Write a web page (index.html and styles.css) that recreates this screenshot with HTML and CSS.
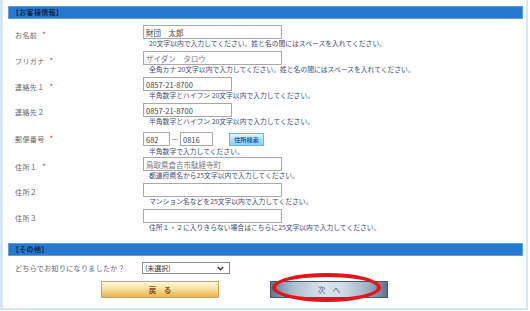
FILE: index.html
```html
<!DOCTYPE html>
<html lang="ja">
<head>
<meta charset="utf-8">
<title>お客様情報</title>
<link rel="stylesheet" href="styles.css">
</head>
<body>
<div class="page">
  <div class="sec-head">【お客様情報】</div>
  <div class="form">
    <div class="row">
      <div class="label">お名前<span class="req">*</span></div>
      <div class="field">
        <div class="inputs"><input class="in wide" type="text" value="財団　太郎"></div>
        <div class="help">20文字以内で入力してください。姓と名の間にはスペースを入れてください。</div>
      </div>
    </div>
    <div class="row">
      <div class="label">フリガナ<span class="req">*</span></div>
      <div class="field">
        <div class="inputs"><input class="in wide muted" type="text" value="ザイダン　タロウ"></div>
        <div class="help">全角カナ 20文字以内で入力してください。姓と名の間にはスペースを入れてください。</div>
      </div>
    </div>
    <div class="row">
      <div class="label">連絡先１<span class="req">*</span></div>
      <div class="field">
        <div class="inputs"><input class="in tel" type="text" value="0857-21-8700"></div>
        <div class="help">半角数字とハイフン 20文字以内で入力してください。</div>
      </div>
    </div>
    <div class="row">
      <div class="label">連絡先２</div>
      <div class="field">
        <div class="inputs"><input class="in tel" type="text" value="0857-21-8700"></div>
        <div class="help">半角数字とハイフン 20文字以内で入力してください。</div>
      </div>
    </div>
    <div class="row zip-row">
      <div class="label">郵便番号<span class="req">*</span></div>
      <div class="field">
        <div class="inputs">
          <input class="in zip1" type="text" value="682">
          <span class="dash">－</span>
          <input class="in zip2" type="text" value="0816">
          <button class="search" type="button">住所検索</button>
        </div>
        <div class="help">半角数字で入力してください。</div>
      </div>
    </div>
    <div class="row">
      <div class="label">住所１<span class="req">*</span></div>
      <div class="field">
        <div class="inputs"><input class="in wide muted" type="text" value="鳥取県倉吉市駄経寺町"></div>
        <div class="help">都道府県名から25文字以内で入力してください。</div>
      </div>
    </div>
    <div class="row">
      <div class="label">住所２</div>
      <div class="field">
        <div class="inputs"><input class="in wide" type="text" value=""></div>
        <div class="help">マンション名などを25文字以内で入力してください。</div>
      </div>
    </div>
    <div class="row">
      <div class="label">住所３</div>
      <div class="field">
        <div class="inputs"><input class="in wide" type="text" value=""></div>
        <div class="help">住所１・２に入りきらない場合はこちらに25文字以内で入力してください。</div>
      </div>
    </div>
  </div>
  <div class="sec-head second">【その他】</div>
  <div class="sel-row">
    <div class="sel-label">どちらでお知りになりましたか？</div>
    <div class="select">
      <span class="sel-text">(未選択)</span>
      <svg class="chev" width="7" height="5" viewBox="0 0 7 5"><path d="M0.8 1 L3.5 3.8 L6.2 1" fill="none" stroke="#333" stroke-width="1.4"/></svg>
    </div>
  </div>
  <div class="actions">
    <button class="btn back" type="button">戻　る</button>
    <div class="next-wrap">
      <button class="btn next" type="button">次　へ</button>
      <div class="circle"></div>
    </div>
  </div>
</div>
</body>
</html>
```
FILE: styles.css
```css
html, body {
  margin: 0;
  padding: 0;
  background: #ffffff;
}
body {
  font-family: "Noto Sans CJK JP", "Noto Sans", sans-serif;
  color: #555;
}
.page {
  width: 528px;
  box-sizing: border-box;
  border-left: 3px solid #d6e6f4;
  border-right: 2px solid #d6e6f4;
  border-bottom: 2px solid #d6e6f4;
  padding: 6px 3px 10px 5px;
}
.sec-head {
  height: 13px;
  box-sizing: border-box;
  background: #2779d0;
  border: 1px solid #5d9fe2;
  color: #10284e;
  font-size: 7px;
  line-height: 11px;
  padding-left: 3px;
  font-weight: bold;
  letter-spacing: 0.3px;
}
.sec-head.second {
  margin-top: 11px;
}
.form {
  padding-top: 6px;
}
.row {
  display: grid;
  grid-template-columns: 128px 1fr;
  margin-bottom: 3px;
  padding-left: 7px;
}
.label {
  font-size: 7px;
  line-height: 9px;
  padding-top: 5px;
  color: #666;
  letter-spacing: 0.4px;
}
.req {
  color: #e8333a;
  margin-left: 5px;
  font-size: 8px;
}
.inputs {
  display: flex;
  align-items: center;
  height: 14px;
}
.in {
  box-sizing: border-box;
  height: 14px;
  border: 1px solid #a8a8a8;
  padding: 0 2px;
  margin: 0;
  font-family: "Noto Sans CJK JP", "Noto Sans", sans-serif;
  font-size: 7.5px;
  color: #444;
  background: #fff;
  outline: none;
}
.in.muted {
  color: #777;
}
.wide { width: 139px; }
.tel { width: 89px; }
.zip1 { width: 27px; }
.zip2 { width: 33px; }
.dash {
  font-size: 7px;
  color: #666;
  width: 10px;
  text-align: center;
}
.search {
  margin-left: 16px;
  width: 35px;
  height: 13px;
  padding: 0;
  border: 1px solid #6bb2e0;
  background: linear-gradient(#eaf7fe, #a9dcf7 55%, #8fd0f3);
  color: #1b5ea8;
  font-family: "Noto Sans CJK JP", sans-serif;
  font-size: 6.2px;
  line-height: 11px;
  font-weight: bold;
}
.zip-row .inputs {
  height: 16px;
  margin-top: 2px;
}
.zip-row {
  margin-bottom: 1px;
}
.help {
  font-size: 6.8px;
  line-height: 9px;
  color: #3a4a78;
  padding-left: 6px;
  white-space: nowrap;
}
.sel-row {
  display: grid;
  grid-template-columns: 127px 88px;
  align-items: center;
  padding-left: 7px;
  margin-top: 6px;
  height: 12px;
}
.sel-label {
  font-size: 7px;
  line-height: 9px;
  color: #666;
  letter-spacing: 0.35px;
}
.select {
  display: flex;
  align-items: center;
  justify-content: space-between;
  box-sizing: border-box;
  width: 88px;
  height: 12px;
  border: 1px solid #8a8a8a;
  background: #fff;
  padding: 0 5px 0 2px;
}
.sel-text {
  font-size: 7px;
  line-height: 10px;
  color: #333;
}
.chev {
  display: block;
}
.actions {
  display: flex;
  align-items: flex-start;
  gap: 51px;
  padding-left: 93px;
  margin-top: 7px;
}
.btn {
  display: block;
  width: 118px;
  height: 17px;
  padding: 0;
  margin: 0;
  font-family: "Noto Sans CJK JP", sans-serif;
  font-size: 7.5px;
  line-height: 15px;
  font-weight: bold;
}
.back {
  border: 1px solid #c9a565;
  background: linear-gradient(#fff8e0, #fbe3a6 40%, #f1c86f 75%, #e6b450);
  color: #8c4a1c;
}
.next-wrap {
  position: relative;
  display: flex;
}
.next {
  border: 1px solid #41596f;
  background: linear-gradient(90deg, #5e7a94 0%, #a9bccd 18%, #dbe4ec 45%, #d3dee8 60%, #a3b6c8 82%, #5a748e 100%);
  color: #4a5a6a;
  font-weight: normal;
}
.circle {
  position: absolute;
  left: 2px;
  top: -8px;
  width: 109px;
  height: 29px;
  box-sizing: border-box;
  border: 4px solid #e8121b;
  border-radius: 50%;
  pointer-events: none;
}
```
